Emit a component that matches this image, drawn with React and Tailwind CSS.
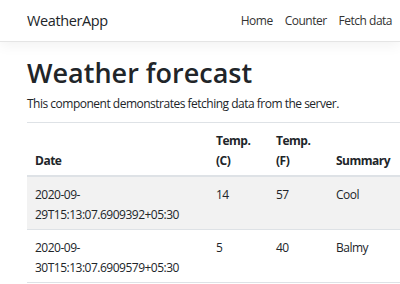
export default function App() {
  const forecasts = [
    { date: '2020-09-29T15:13:07.6909392+05:30', c: 14, f: 57, summary: 'Cool' },
    { date: '2020-09-30T15:13:07.6909579+05:30', c: 5, f: 40, summary: 'Balmy' },
  ]

  return (
    <div className="w-[400px] h-[284px] overflow-hidden bg-white text-[#212529] font-['Open_Sans',sans-serif] text-[12px] tracking-[-0.5px]">
      {/* Navbar */}
      <nav className="h-[42px] flex items-center justify-between pl-[27px] pr-[8px] bg-white border-b border-[#e5e5e5] shadow-[0_4px_12px_rgba(0,0,0,0.05)] relative">
        <span className="text-[14.5px] tracking-[-0.4px] text-[#212529]">WeatherApp</span>
        <div className="flex gap-[12px] text-[#333]">
          <span>Home</span>
          <span>Counter</span>
          <span>Fetch data</span>
        </div>
      </nav>

      <div className="pl-[27px]">
        <h1 className="mt-[14px] text-[27px] font-semibold leading-[34px] tracking-[0px]">Weather forecast</h1>
        <p className="mt-[4px] leading-[20px]">This component demonstrates fetching data from the server.</p>

        <table className="mt-[8px] w-[420px] table-fixed border-collapse">
          <colgroup>
            <col className="w-[179px]" />
            <col className="w-[60px]" />
            <col className="w-[60px]" />
            <col />
          </colgroup>
          <thead>
            <tr className="border-t border-[#dee2e6] border-b-2">
              <th className="text-left align-bottom font-bold px-[8px] pt-[8px] pb-[4px] leading-[20px]">Date</th>
              <th className="text-left align-bottom font-bold pl-[10px] pr-[8px] pt-[8px] pb-[4px] leading-[20px]">Temp. (C)</th>
              <th className="text-left align-bottom font-bold pl-[10px] pr-[8px] pt-[8px] pb-[4px] leading-[20px]">Temp. (F)</th>
              <th className="text-left align-bottom font-bold pl-[10px] pr-[8px] pt-[8px] pb-[4px] leading-[20px]">Summary</th>
            </tr>
          </thead>
          <tbody>
            {forecasts.map((f, i) => (
              <tr key={i} className={`border-b border-[#dee2e6] ${i % 2 === 0 ? 'bg-[#f2f2f2]' : 'bg-white'}`}>
                <td className="align-top px-[8px] pt-[8px] pb-[4px] leading-[20px]">
                  {f.date.slice(0, 8)}<wbr />{f.date.slice(8)}
                </td>
                <td className="align-top pl-[10px] pt-[8px] pb-[4px] leading-[20px]">{f.c}</td>
                <td className="align-top pl-[10px] pt-[8px] pb-[4px] leading-[20px]">{f.f}</td>
                <td className="align-top pl-[10px] pt-[8px] pb-[4px] leading-[20px]">{f.summary}</td>
              </tr>
            ))}
          </tbody>
        </table>
      </div>
    </div>
  )
}
